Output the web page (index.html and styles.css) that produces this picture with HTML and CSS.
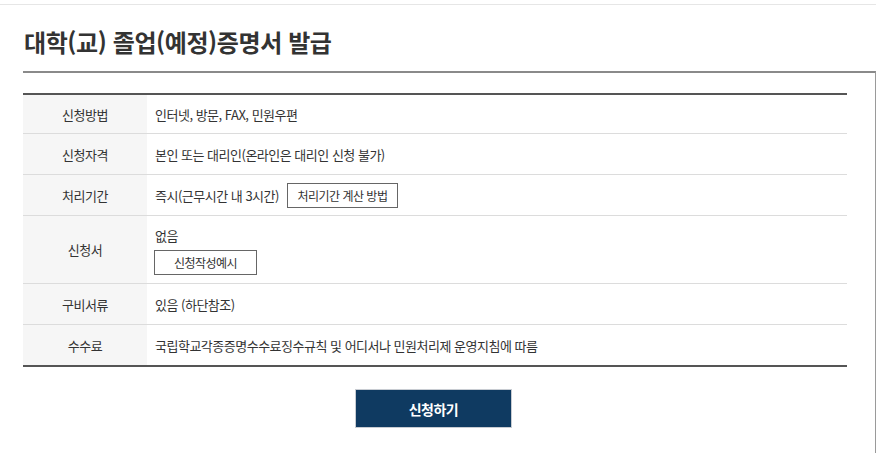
FILE: index.html
```html
<!DOCTYPE html>
<html lang="ko">
<head>
<meta charset="utf-8">
<title>대학(교) 졸업(예정)증명서 발급</title>
<link rel="stylesheet" href="styles.css">
</head>
<body>
<div class="page">
  <h1 class="title">대학(교) 졸업(예정)증명서 발급</h1>
  <div class="box">
    <div class="info">
      <div class="row r1">
        <div class="label">신청방법</div>
        <div class="value">인터넷, 방문, FAX, 민원우편</div>
      </div>
      <div class="row">
        <div class="label">신청자격</div>
        <div class="value">본인 또는 대리인(온라인은 대리인 신청 불가)</div>
      </div>
      <div class="row">
        <div class="label">처리기간</div>
        <div class="value">즉시(근무시간 내 3시간) <span class="sbtn sbtn-inline">처리기간 계산 방법</span></div>
      </div>
      <div class="row r4">
        <div class="label">신청서</div>
        <div class="value stack">
          <span>없음</span>
          <span class="sbtn sbtn-block">신청작성예시</span>
        </div>
      </div>
      <div class="row">
        <div class="label">구비서류</div>
        <div class="value">있음 (하단참조)</div>
      </div>
      <div class="row last">
        <div class="label">수수료</div>
        <div class="value">국립학교각종증명수수료징수규칙 및 어디서나 민원처리제 운영지침에 따름</div>
      </div>
    </div>
    <div class="actions">
      <button class="submit" type="button">신청하기</button>
    </div>
  </div>
</div>
</body>
</html>
```
FILE: styles.css
```css
html, body {
  margin: 0;
  padding: 0;
  background: #fff;
}
body {
  font-family: "Noto Sans CJK KR", "Noto Sans", sans-serif;
  color: #333;
}
.page {
  width: 876px;
  margin-top: 4px;
  border-top: 1px solid #e6e6e6;
}
.title {
  margin: 0;
  padding: 22px 0 0 24px;
  height: 66px;
  box-sizing: border-box;
  font-size: 24px;
  line-height: 30px;
  font-weight: 700;
  letter-spacing: -0.4px;
  color: #333;
}
.box {
  margin-left: 23px;
  border-top: 2px solid #8a8a8a;
  border-right: 1px solid #9a9a9a;
  padding: 20px 28px 30px 0;
}
.info {
  width: 824px;
  border-top: 2px solid #555;
  border-bottom: 2px solid #555;
}
.row {
  display: flex;
  min-height: 40px;
  border-bottom: 1px solid #dcdcdc;
  font-size: 13px;
  letter-spacing: -0.5px;
}
.row.r1 { min-height: 38px; }
.row.r4 { min-height: 67px; }
.row.last { border-bottom: 0; }
.label {
  width: 124px;
  flex: none;
  background: #f6f6f6;
  display: flex;
  align-items: center;
  justify-content: center;
  color: #333;
}
.value {
  flex: 1;
  display: flex;
  align-items: center;
  padding-left: 8px;
  color: #333;
}
.value.stack {
  flex-direction: column;
  align-items: flex-start;
  justify-content: center;
  gap: 5px;
  padding-top: 2px;
}
.sbtn {
  display: inline-flex;
  align-items: center;
  justify-content: center;
  height: 25px;
  box-sizing: border-box;
  border: 1px solid #666;
  background: #fff;
  font-size: 12px;
  letter-spacing: -0.5px;
  color: #333;
}
.sbtn-inline {
  width: 111px;
  margin-left: 8px;
}
.sbtn-block {
  width: 103px;
  margin-left: -1px;
}
.actions {
  display: flex;
  justify-content: center;
  padding-top: 22px;
  padding-right: 3px;
}
.submit {
  width: 157px;
  height: 39px;
  border: 1px solid #c8ccd2;
  background: #0f3a61;
  color: #fff;
  font-family: "Noto Sans CJK KR", sans-serif;
  font-size: 14px;
  font-weight: 700;
  letter-spacing: -0.5px;
  padding: 0;
}
```
